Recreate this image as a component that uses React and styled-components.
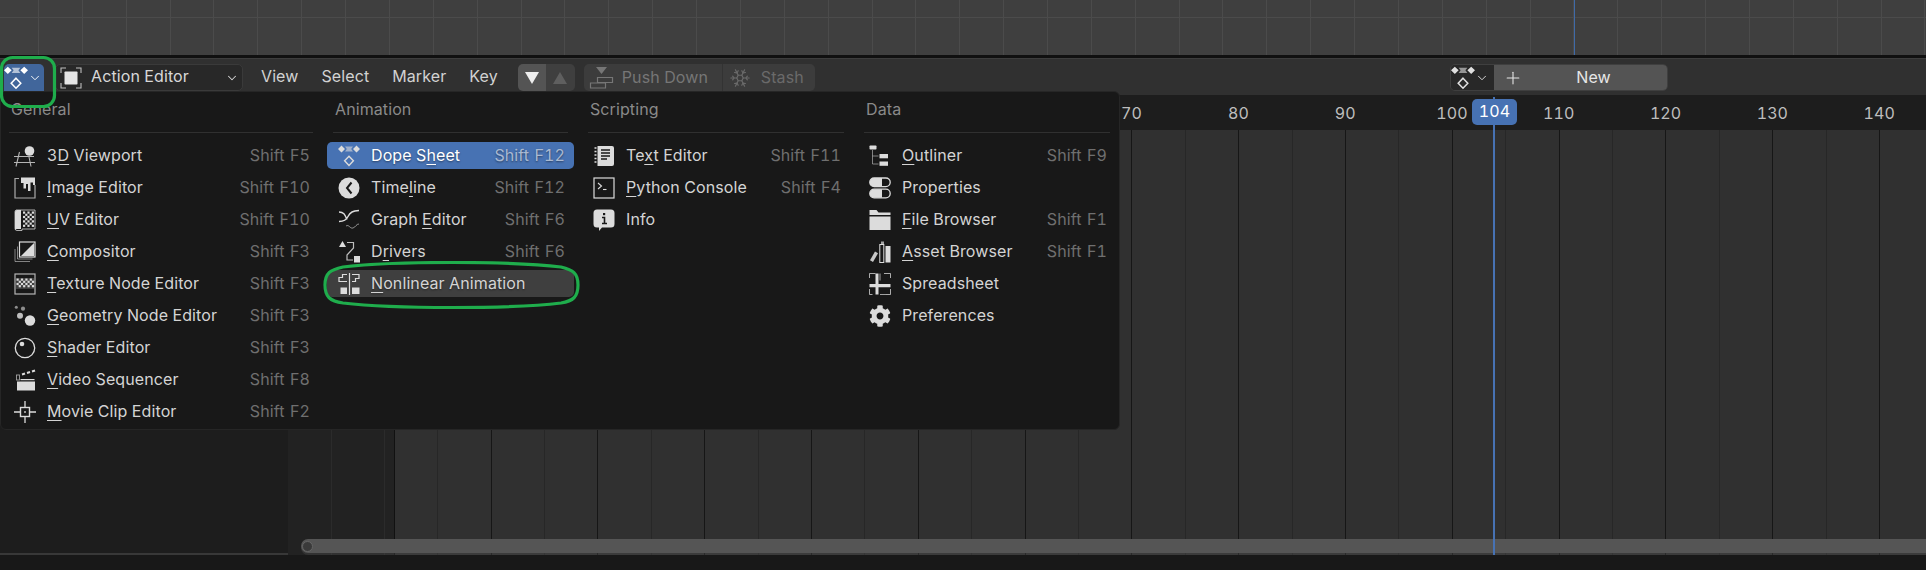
import React from 'react';
import styled, { createGlobalStyle } from 'styled-components';
import { ChevronDown, Plus, Snowflake } from 'lucide-react';
import { FaCog } from 'react-icons/fa';

const BLUE = '#4772b3';
const ICON = '#dcdcdc';
const DIM = '#8a8a8a';

// one vertical line every `period` px, first one at `x`
const lines = (color, x, period) =>
  `repeating-linear-gradient(to right, transparent ${x - period + 1}px, transparent ${x}px, ${color} ${x}px, ${color} ${x + 1}px)`;

const GlobalStyle = createGlobalStyle`
  html, body {
    margin: 0;
    background: #181818;
    overflow: hidden;
  }
`;

const Screen = styled.div`
  position: relative;
  display: flex;
  flex-direction: column;
  width: 1926px;
  height: 570px;
  overflow: hidden;
  font-family: Inter, "Noto Sans", sans-serif;
  font-size: 16px;
  letter-spacing: 0.1px;
  font-variant-numeric: tabular-nums;
  color: #d4d4d4;
`;

const TopView = styled.div`
  height: 55px;
  flex: none;
  background-color: #3f3f3f;
  background-image:
    linear-gradient(to right, transparent 1574px, #3f6aa8 1574px, #3f6aa8 1575px, transparent 1575px),
    linear-gradient(to bottom, transparent 17px, #4b4b4b 17px, #4b4b4b 18px, transparent 18px),
    ${lines('#4b4b4b', 38, 43.87)};
`;

const AreaGap = styled.div`
  height: 3px;
  flex: none;
  background: #101010;
`;

const Header = styled.div`
  display: flex;
  align-items: flex-start;
  height: 37px;
  flex: none;
  box-sizing: border-box;
  padding: 5px 258px 0 4px;
  background: #303030;
  border-top: 1px solid #3d3d3d;
  line-height: 25px;
`;

const EditorButton = styled.div`
  display: flex;
  align-items: center;
  width: 40px;
  height: 27px;
  flex: none;
  background: #41669b;
  border-radius: 5px 5px 0 0;
  color: #fff;
`;

const ModeSelect = styled.div`
  display: flex;
  align-items: center;
  width: 188px;
  height: 27px;
  flex: none;
  box-sizing: border-box;
  margin-left: 11px;
  padding: 0 3px 0 4px;
  background: #282828;
  border: 1px solid #3a3a3a;
  border-radius: 5px;
`;

const ModeLabel = styled.span`
  flex: 1;
  margin: -2px 0 0 9px;
  color: #d8d8d8;
`;

const MenuBar = styled.div`
  display: flex;
  gap: 23px;
  height: 27px;
  margin-left: 18px;
  color: #d2d2d2;
`;

const Segment = styled.div`
  display: flex;
  height: 27px;
  flex: none;
  margin-left: ${(p) => p.$gap}px;
  border-radius: 5px;
  overflow: hidden;
`;

const SegmentCell = styled.div`
  display: flex;
  align-items: center;
  justify-content: ${(p) => (p.$pad ? 'flex-start' : 'center')};
  box-sizing: border-box;
  width: ${(p) => p.$width}px;
  padding-left: ${(p) => p.$pad || 0}px;
  gap: ${(p) => p.$space || 0}px;
  background: ${(p) => p.$bg};
  color: ${(p) => p.$color};
  border-left: ${(p) => (p.$divide ? '1px solid #333' : 'none')};
`;

const ActionSlot = styled.div`
  display: flex;
  height: 27px;
  flex: none;
  margin-left: auto;
  border: 1px solid #3f3f3f;
  box-sizing: border-box;
  border-radius: 5px;
  overflow: hidden;
`;

const SlotIcon = styled.div`
  display: flex;
  align-items: center;
  width: 43px;
  background: #282828;
  color: #e0e0e0;
`;

const NewButton = styled.div`
  position: relative;
  display: flex;
  align-items: center;
  justify-content: center;
  width: 173px;
  padding-left: 26px;
  box-sizing: border-box;
  background: #545454;
  color: #e6e6e6;
`;

const PlusMark = styled(Plus)`
  position: absolute;
  left: 9px;
  top: 3px;
`;

const Ruler = styled.div`
  position: relative;
  height: 35px;
  flex: none;
  background: #1d1d1d;
`;

const FrameNumber = styled.span`
  position: absolute;
  top: 0;
  left: ${(p) => 1452 + (p.$frame - 100) * 10.68}px;
  transform: translateX(-50%);
  line-height: 36px;
  color: #bdbdbd;
`;

const FrameBadge = styled.div`
  position: absolute;
  left: 1472px;
  top: 4px;
  width: 45px;
  height: 26px;
  z-index: 2;
  background: ${BLUE};
  border-radius: 5px;
  color: #fff;
  text-align: center;
  line-height: 25px;
`;

const Timeline = styled.div`
  position: relative;
  display: flex;
  height: 425px;
  flex: none;
`;

const Sidebar = styled.div`
  width: 288px;
  flex: none;
  background: #1d1d1d;
  border-bottom: 2px solid #383838;
  box-sizing: border-box;
`;

const OutOfRange = styled.div`
  width: 107px;
  flex: none;
  box-sizing: border-box;
  background-color: #222;
  background-image: ${lines('#2b2b2b', 43, 53.4)};
  border-right: 1px solid #111;
`;

const Frames = styled.div`
  flex: 1;
  background-color: #303030;
  background-image: ${lines('#161616', 95.6, 106.8)}, ${lines('#272727', 42.2, 106.8)};
`;

const Scrollbar = styled.div`
  position: absolute;
  left: 301px;
  right: 0;
  bottom: 2px;
  display: flex;
  align-items: center;
  height: 14px;
  background: #555;
  border-radius: 7px 0 0 7px;
  box-shadow: 0 2px 0 rgba(80, 80, 80, 0.35);
`;

const ScrollHandle = styled.div`
  width: 9px;
  height: 9px;
  margin-left: 1px;
  border: 1px solid #666;
  border-radius: 50%;
  background: #3a3a3a;
`;

const Playhead = styled.div`
  position: absolute;
  left: 1493px;
  top: 97px;
  width: 2px;
  height: 458px;
  background: ${BLUE};
`;

const StatusBar = styled.div`
  flex: 1;
  background: #181818;
`;

const EditorMenu = styled.div`
  position: absolute;
  left: 0;
  top: 91px;
  z-index: 3;
  display: grid;
  grid-template-columns: 316px 247px 268px 258px;
  gap: 8px;
  width: 1120px;
  height: 339px;
  box-sizing: border-box;
  padding: 7px 0 0 2px;
  background: #181818;
  border: 1px solid #262626;
  border-radius: 0 6px 6px 6px;
`;

const ColumnTitle = styled.div`
  padding-left: 8px;
  line-height: 20px;
  color: ${DIM};
`;

const ColumnRule = styled.div`
  height: 1px;
  margin: 13px 6px 9px;
  background: #303030;
`;

const Rows = styled.div`
  display: flex;
  flex-direction: column;
  gap: 5px;
`;

const Row = styled.div`
  display: flex;
  align-items: center;
  height: 27px;
  padding: 0 9px 0 11px;
  border-radius: 5px;
  line-height: 25px;
  background: ${(p) => (p.$state === 'active' ? BLUE : p.$state === 'hover' ? '#3f3f3f' : 'transparent')};
  color: ${(p) => (p.$state === 'active' ? '#fff' : '#d4d4d4')};
  text-shadow: ${(p) => (p.$state ? '0 1px 2px rgba(0,0,0,.45)' : 'none')};
`;

const RowIcon = styled.span`
  display: flex;
  width: 22px;
  height: 22px;
  flex: none;
  margin-right: 11px;
  color: ${ICON};
`;

const RowLabel = styled.span`
  flex: 1;
  white-space: nowrap;
  margin-top: -1px;
`;

const Shortcut = styled.span`
  color: ${(p) => (p.$active ? '#a9b9d2' : '#6f6f6f')};
  white-space: nowrap;
  word-spacing: 1px;
  margin-top: -1px;
`;

const Mnemonic = styled.span`
  text-decoration: underline;
  text-decoration-thickness: 1px;
  text-underline-offset: 3px;
`;

const Callout = styled.svg`
  position: absolute;
  z-index: 4;
  fill: none;
  stroke: #1fad4c;
  stroke-width: 3.2;
`;

const Ico = ({ children, color, size = 22, box = '0 0 22 22' }) => (
  <svg width={size} height={size} viewBox={box} fill="none" stroke="none" style={{ color, flex: 'none' }}>
    {children}
  </svg>
);

const C = 'currentColor';

const DopeIcon = ({ size }) => (
  <Ico size={size}>
    <path d="M3.5 .6 7 4 3.500 7.400 0 4zM18.500 .6 22 4l-3.500 3.400L15 4z" fill={C} />
    <path d="M7 1.500h8L13.200 4 15 6.500H7L8.800 4z" fill={C} opacity=".6" />
    <path d="M11 11.200 15.400 15.800 11 20.400 6.600 15.800z" stroke={C} strokeWidth="1.400" />
  </Ico>
);

const ChessBits = ({ x, y, cols, rows, s = 2.2 }) => {
  const bits = [];
  for (let r = 0; r < rows; r++) {
    for (let c = 0; c < cols; c++) {
      if ((r + c) % 2 === 0) bits.push(<rect key={`${r}-${c}`} x={x + c * s} y={y + r * s} width={s} height={s} fill={C} />);
    }
  }
  return <>{bits}</>;
};

const icons = {
  viewport: (
    <Ico>
      <circle cx="15.500" cy="6" r="4.800" fill={C} />
      <path d="M0 11.500h20M0 17.500h21M5.500 7 2 21.500M15 12l2 9.500" stroke={C} strokeWidth="1.100" opacity=".8" />
    </Ico>
  ),
  image: (
    <Ico>
      <path d="M5 1.500H1v19.500h20V8" stroke={C} strokeWidth="1.200" opacity=".75" />
      <path d="M7 .5h14V8h-2V5.500h-2.500V14H14V7h-2v4.500H9.500V6H7z" fill={C} />
    </Ico>
  ),
  uv: (
    <Ico>
      <path d="M2 1h19v19H8v1.500H3A2 2 0 0 1 1 19.500V3a2 2 0 0 1 1-2z" stroke={C} strokeWidth="1" opacity=".75" />
      <path d="M1 3a2 2 0 0 1 2-2h4v19H3a2 2 0 0 0-2 1z" fill={C} />
      <ChessBits x={9} y={2.500} cols={5} rows={7} />
    </Ico>
  ),
  compositor: (
    <Ico>
      <rect x="5.500" y="1" width="15.500" height="15" stroke={C} strokeWidth="1.200" />
      <path d="M20 2v13H7z" fill={C} />
      <path d="M3.500 5.500V18h15M1 8v12.500h15" stroke={C} strokeWidth="1" opacity=".55" />
    </Ico>
  ),
  texture: (
    <Ico>
      <rect x="1" y="1" width="20" height="20" stroke={C} strokeWidth="1.200" opacity=".8" />
      <rect x="2" y="5" width="18" height="11" fill={C} opacity=".2" />
      <ChessBits x={2.500} y={5.500} cols={8} rows={4} />
    </Ico>
  ),
  geometry: (
    <Ico>
      <circle cx="2.300" cy="2.300" r="1.500" fill={C} opacity=".6" />
      <circle cx="9" cy="3.700" r="2.100" fill={C} opacity=".6" />
      <circle cx="6" cy="10.700" r="3" fill={C} opacity=".85" />
      <circle cx="16" cy="15.500" r="5.200" fill={C} />
    </Ico>
  ),
  shader: (
    <Ico>
      <circle cx="11" cy="11" r="9.700" stroke={C} strokeWidth="1.300" />
      <circle cx="8" cy="7" r="2.300" fill={C} />
    </Ico>
  ),
  sequencer: (
    <Ico>
      <rect x="3" y="12.500" width="18" height="9" fill={C} />
      <rect x="2.500" y="6" width="3" height="5" stroke={C} strokeWidth=".9" opacity=".7" />
      <rect x="6.500" y="10" width="14" height="1.200" fill={C} />
      <path d="M8 5.500l3-1M13 4l3-1M18 2.500l3-1" stroke={C} strokeWidth="2" />
    </Ico>
  ),
  clip: (
    <Ico>
      <rect x="6.500" y="6.500" width="9" height="9" stroke={C} strokeWidth="1.400" />
      <path d="M11 0v6.500M11 15.500V22M0 11h6.500M15.500 11H22" stroke={C} strokeWidth="1.300" />
      <rect x="10.200" y="10.200" width="1.600" height="1.600" fill={C} />
    </Ico>
  ),
  dope: <DopeIcon />,
  timeline: (
    <Ico>
      <circle cx="11" cy="11" r="10.500" fill={C} />
      <path d="M13.500 5.500 9 11l4.500 5.500" stroke="#181818" strokeWidth="2" />
    </Ico>
  ),
  graph: (
    <Ico>
      <path d="M1 3c5 0 6 3 8 7.500M1 12.500c4 0 7-.5 9-5S15 2 21 1.500" stroke={C} strokeWidth="1.400" />
      <path d="M8 17c3-2 4 3 7 2s3-4 6-4" stroke={C} strokeWidth="1" opacity=".6" />
    </Ico>
  ),
  drivers: (
    <Ico>
      <path d="M4.500 0 8 6H1z" fill={C} />
      <path d="M9 1.500h6.500V7L9 14v5h6" stroke={C} strokeWidth="1.200" opacity=".85" />
      <rect x="16" y="15" width="6" height="6.500" fill={C} />
    </Ico>
  ),
  nla: (
    <Ico>
      <path d="M11.500 0v22" stroke={C} strokeWidth="1.200" />
      <path d="M9 1.500H4.500v3H1v4h8M14 1.500h7v4h-3.500v3H14" stroke={C} strokeWidth="1.200" />
      <rect x="2.500" y="14.500" width="6.500" height="6.500" fill={C} />
      <rect x="14" y="14.500" width="7.500" height="6.500" fill={C} />
    </Ico>
  ),
  text: (
    <Ico>
      <path d="M4.500 1H19a2 2 0 0 1 2 2v16a2 2 0 0 1-2 2H4.500z" fill={C} />
      <path d="M1.500 3h2M1.500 6.500h2M1.500 10h2M1.500 13.500h2M1.500 17h2" stroke={C} strokeWidth="1.400" />
      <path d="M8 5h9M8 8h9M8 11h9M8 14h6" stroke="#181818" strokeWidth="1.300" />
    </Ico>
  ),
  console: (
    <Ico>
      <rect x="1" y="1" width="20" height="20" stroke={C} strokeWidth="1.200" />
      <path d="M5 6l3.500 3L5 12" stroke={C} strokeWidth="1.100" />
      <path d="M10 12.500h3.500" stroke={C} strokeWidth="1.100" />
    </Ico>
  ),
  info: (
    <Ico>
      <path d="M4 .5h14a3.500 3.500 0 0 1 3.500 3.500v11a3.500 3.500 0 0 1-3.500 3.500H9L6 22v-3.500H4A3.500 3.500 0 0 1 .5 15V4A3.500 3.500 0 0 1 4 .5z" fill={C} />
      <path d="M9 8.500h2.500V14M9 14.500h5" stroke="#181818" strokeWidth="1.600" />
      <rect x="10" y="4" width="2.200" height="2.200" fill="#181818" />
    </Ico>
  ),
  outliner: (
    <Ico>
      <rect x=".5" y=".5" width="7" height="4" rx=".8" fill={C} />
      <rect x="10.500" y="9" width="8.500" height="4.300" fill={C} />
      <rect x="10.500" y="16.500" width="8.500" height="4.300" fill={C} />
      <path d="M3.500 5v14h6M3.500 11h6" stroke={C} strokeWidth=".9" opacity=".6" />
    </Ico>
  ),
  properties: (
    <Ico>
      <rect x=".8" y="1" width="20.400" height="8.600" rx="4.300" stroke={C} strokeWidth="1.300" />
      <path d="M5 1h8v8.600H5a4.300 4.300 0 0 1 0-8.600z" fill={C} />
      <rect x=".8" y="12.200" width="20.400" height="8.600" rx="4.300" stroke={C} strokeWidth="1.300" />
      <path d="M5 12.200h8v8.600H5a4.300 4.300 0 0 1 0-8.600z" fill={C} />
    </Ico>
  ),
  files: (
    <Ico>
      <path d="M.5 1h7l2 2.500h12V6H.5z" fill={C} />
      <rect x=".5" y="7.500" width="21" height="13.500" fill={C} />
    </Ico>
  ),
  assets: (
    <Ico>
      <path d="M6 10.500l3 1.800-5 8.700-3-1.800z" fill={C} opacity=".9" />
      <rect x="10.800" y="3.500" width="4" height="18" stroke={C} strokeWidth="1" />
      <path d="M16.500 5h5v16.500h-5z" fill={C} />
      <path d="M12 .5h3v3h-3z" fill={C} opacity=".7" />
    </Ico>
  ),
  spreadsheet: (
    <Ico>
      <path d="M.5 5V.5h6M15 .5h6.500V5M.5 16v5.500h3M17 21.500h4.500V16" stroke={C} strokeWidth="1" opacity=".75" />
      <path d="M6.500 .5h3v21h-3zM.5 11h21v3.200H.5z" fill={C} />
      <path d="M11 7.500V.5M11 21.500h6" stroke={C} strokeWidth="1" opacity=".7" />
    </Ico>
  ),
  prefs: <FaCog size={22} />,
};

const columns = [
  {
    title: 'General',
    items: [
      { icon: 'viewport', label: '3D Viewport', u: 1, keys: 'Shift F5' },
      { icon: 'image', label: 'Image Editor', u: 0, keys: 'Shift F10' },
      { icon: 'uv', label: 'UV Editor', u: 0, keys: 'Shift F10' },
      { icon: 'compositor', label: 'Compositor', u: 0, keys: 'Shift F3' },
      { icon: 'texture', label: 'Texture Node Editor', u: 0, keys: 'Shift F3' },
      { icon: 'geometry', label: 'Geometry Node Editor', u: 0, keys: 'Shift F3' },
      { icon: 'shader', label: 'Shader Editor', u: 0, keys: 'Shift F3' },
      { icon: 'sequencer', label: 'Video Sequencer', u: 0, keys: 'Shift F8' },
      { icon: 'clip', label: 'Movie Clip Editor', u: 0, keys: 'Shift F2' },
    ],
  },
  {
    title: 'Animation',
    items: [
      { icon: 'dope', label: 'Dope Sheet', u: 6, keys: 'Shift F12', state: 'active' },
      { icon: 'timeline', label: 'Timeline', u: 4, keys: 'Shift F12' },
      { icon: 'graph', label: 'Graph Editor', u: 6, keys: 'Shift F6' },
      { icon: 'drivers', label: 'Drivers', u: 1, keys: 'Shift F6' },
      { icon: 'nla', label: 'Nonlinear Animation', u: 0, state: 'hover' },
    ],
  },
  {
    title: 'Scripting',
    items: [
      { icon: 'text', label: 'Text Editor', u: 2, keys: 'Shift F11' },
      { icon: 'console', label: 'Python Console', u: 0, keys: 'Shift F4' },
      { icon: 'info', label: 'Info' },
    ],
  },
  {
    title: 'Data',
    items: [
      { icon: 'outliner', label: 'Outliner', u: 0, keys: 'Shift F9' },
      { icon: 'properties', label: 'Properties' },
      { icon: 'files', label: 'File Browser', u: 0, keys: 'Shift F1' },
      { icon: 'assets', label: 'Asset Browser', u: 0, keys: 'Shift F1' },
      { icon: 'spreadsheet', label: 'Spreadsheet' },
      { icon: 'prefs', label: 'Preferences' },
    ],
  },
];

const frameNumbers = [70, 80, 90, 100, 110, 120, 130, 140];

const Label = ({ text, u }) =>
  u === undefined ? (
    text
  ) : (
    <>
      {text.slice(0, u)}
      <Mnemonic>{text[u]}</Mnemonic>
      {text.slice(u + 1)}
    </>
  );

const App = () => (
  <Screen>
    <GlobalStyle />
    <TopView />
    <AreaGap />
    <Header>
      <EditorButton>
        <DopeIcon size={24} />
        <ChevronDown size={14} strokeWidth={1.6} />
      </EditorButton>
      <ModeSelect>
        <Ico size={22}>
          <path d="M1 6V1h5M16 1h5v5M1 16v5h5M16 21h5v-5" stroke="#bdbdbd" strokeWidth="1.100" />
          <rect x="4.500" y="4.500" width="13" height="13" fill="#e6e6e6" rx=".8" />
        </Ico>
        <ModeLabel>Action Editor</ModeLabel>
        <ChevronDown size={14} strokeWidth={1.8} />
      </ModeSelect>
      <MenuBar>
        <span>View</span>
        <span>Select</span>
        <span>Marker</span>
        <span>Key</span>
      </MenuBar>
      <Segment $gap={20}>
        <SegmentCell $width={28} $bg="#545454" $color="#eee">
          <svg width="14" height="12" viewBox="0 0 14 12">
            <path d="M0 0h14L7 12z" fill="currentColor" />
          </svg>
        </SegmentCell>
        <SegmentCell $width={29} $bg="#3f3f3f" $color="#5f5f5f">
          <svg width="14" height="12" viewBox="0 0 14 12">
            <path d="M0 12h14L7 0z" fill="currentColor" />
          </svg>
        </SegmentCell>
      </Segment>
      <Segment $gap={9}>
        <SegmentCell $width={138} $pad={5} $bg="#3c3c3c" $color="#767676" $space={7}>
          <Ico size={26} box="0 0 26 26">
            <path d="M7 2h11l-5.500 7z" fill="currentColor" />
            <path d="M8.500 12.500h15v5h-15zM1.500 18h15v5h-15z" stroke="currentColor" strokeWidth="1.200" />
          </Ico>
          <span>Push Down</span>
        </SegmentCell>
        <SegmentCell $width={93} $pad={6} $bg="#3c3c3c" $color="#6a6a6a" $divide $space={10}>
          <Snowflake size={22} strokeWidth={1.3} />
          <span>Stash</span>
        </SegmentCell>
      </Segment>
      <ActionSlot>
        <SlotIcon>
          <DopeIcon size={24} />
          <ChevronDown size={14} strokeWidth={1.6} />
        </SlotIcon>
        <NewButton>
          <PlusMark size={20} strokeWidth={1.3} />
          New
        </NewButton>
      </ActionSlot>
    </Header>
    <Ruler>
      {frameNumbers.map((frame) => (
        <FrameNumber key={frame} $frame={frame}>
          {frame}
        </FrameNumber>
      ))}
      <FrameBadge>104</FrameBadge>
    </Ruler>
    <Timeline>
      <Sidebar />
      <OutOfRange />
      <Frames />
      <Scrollbar>
        <ScrollHandle />
      </Scrollbar>
    </Timeline>
    <StatusBar />
    <Playhead />
    <EditorMenu>
      {columns.map((column) => (
        <div key={column.title}>
          <ColumnTitle>{column.title}</ColumnTitle>
          <ColumnRule />
          <Rows>
            {column.items.map((item) => (
              <Row key={item.label} $state={item.state}>
                <RowIcon>{icons[item.icon]}</RowIcon>
                <RowLabel>
                  <Label text={item.label} u={item.u} />
                </RowLabel>
                {item.keys && <Shortcut $active={item.state === 'active'}>{item.keys}</Shortcut>}
              </Row>
            ))}
          </Rows>
        </div>
      ))}
    </EditorMenu>
    <Callout width="58" height="54" viewBox="0 0 58 54" style={{ left: 0, top: 55 }}>
      <rect x="1.500" y="2.500" width="53" height="49" rx="11" />
    </Callout>
    <Callout width="258" height="50" viewBox="0 0 258 50" style={{ left: 323, top: 261 }}>
      <path d="M2 24C2 12 7 9 20 6 70 0 190 0 238 6c12 3 17 6 17 18s-5 16-17 18c-48 6-168 6-218 0C7 40 2 36 2 24z" />
    </Callout>
  </Screen>
);

export default App;
